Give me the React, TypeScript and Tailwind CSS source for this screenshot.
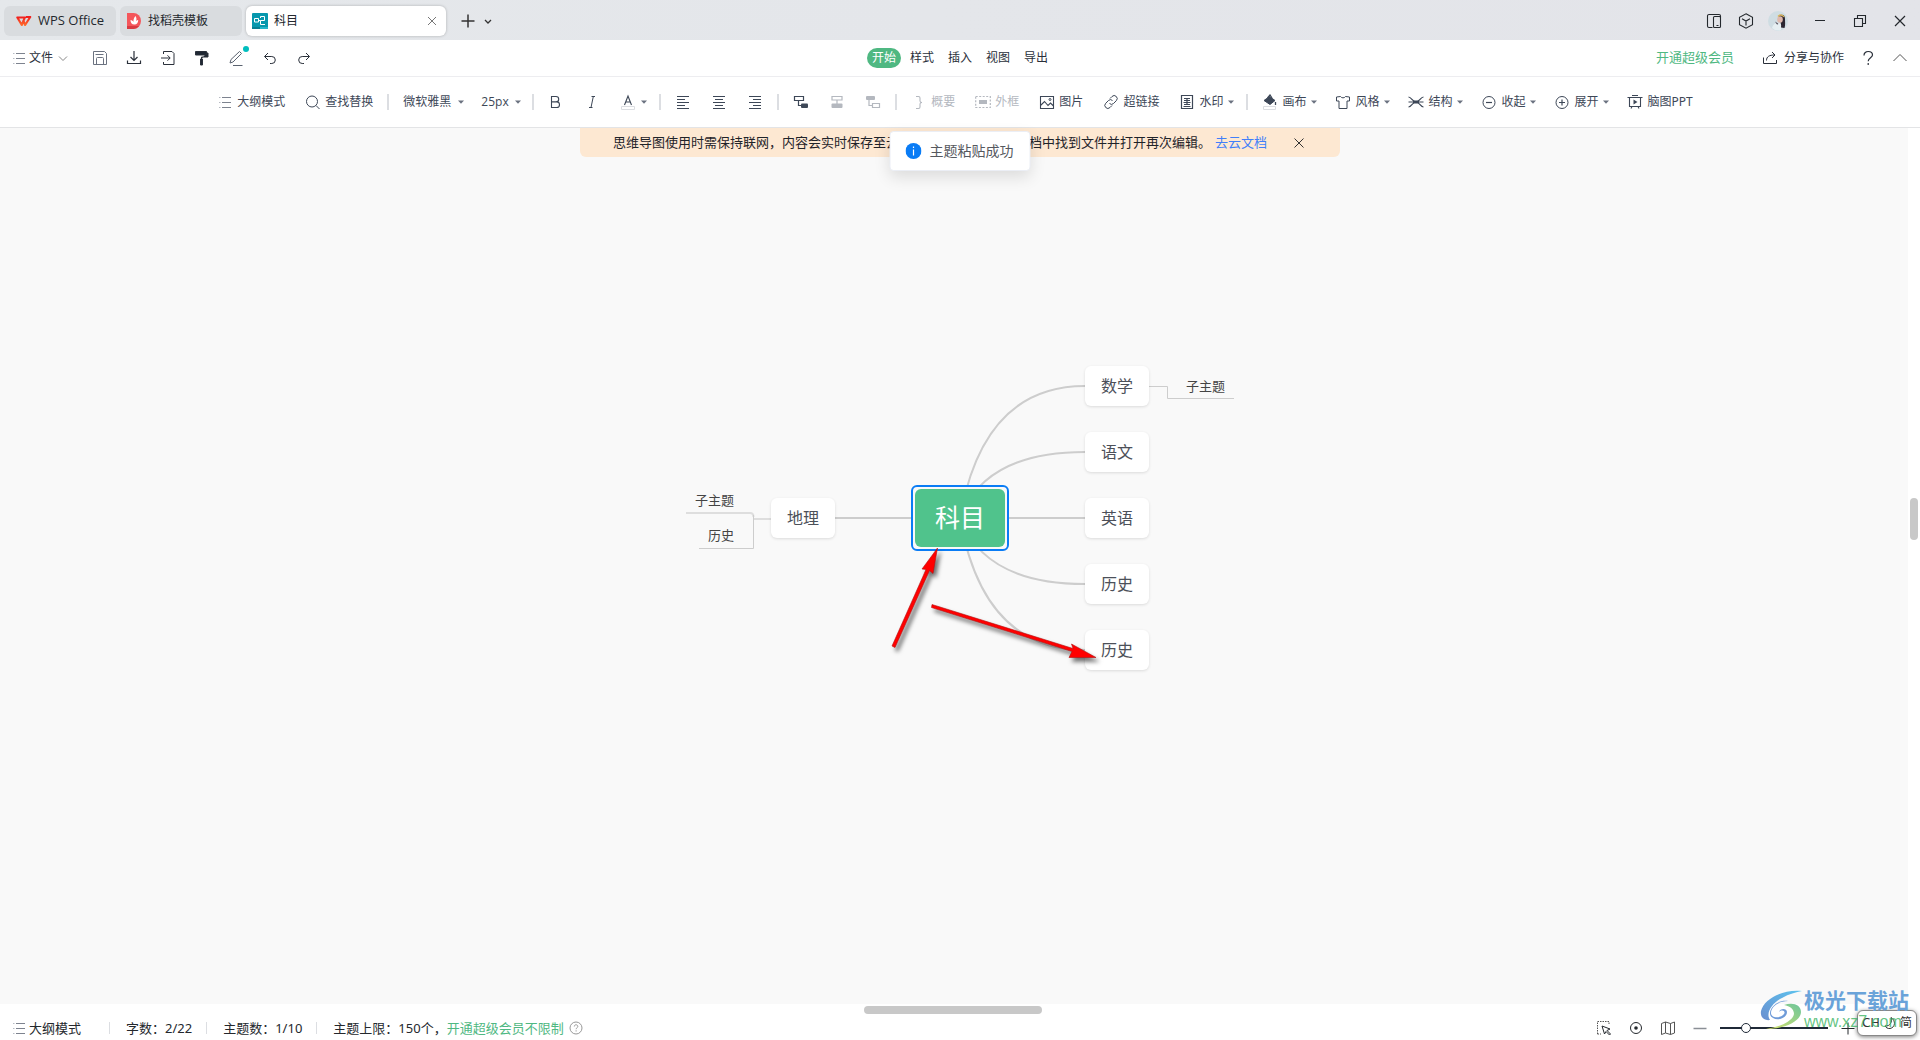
import * as React from "react";
import { clsx } from "clsx";

type IconProps = { children: React.ReactNode; className?: string };

function Icon({ children, className }: IconProps) {
  return (
    <svg viewBox="0 0 16 16" fill="none" stroke="currentColor" strokeWidth="1" className={clsx("h-4 w-4 shrink-0", className)} aria-hidden="true">
      {children}
    </svg>
  );
}

function Caret() {
  return (
    <svg viewBox="0 0 8 8" className="h-2 w-2 shrink-0" aria-hidden="true">
      <path d="M1 2.5h6L4 5.8z" fill="#6b7280" />
    </svg>
  );
}

function ListIcon() {
  return (
    <Icon>
      <path d="M2 3.5h1.5M2 8.5h1.5M2 13.5h1.5" stroke="#b6bac2" />
      <path d="M5 3.5h9M5 8.5h9M5 13.5h9" stroke="#7d838f" />
    </Icon>
  );
}

function Separator() {
  return <span className="mx-1 h-4 w-0.5 shrink-0 bg-[#dcdee2]" />;
}

type ToolProps = { label: string; icon: React.ReactNode; text?: string; menu?: boolean; disabled?: boolean };

function Tool({ label, icon, text, menu, disabled }: ToolProps) {
  return (
    <button
      type="button"
      aria-label={label}
      disabled={disabled}
      className={clsx("flex h-8 items-center gap-1 pl-2.5 whitespace-nowrap", menu ? "pr-[7px]" : "pr-2.5", disabled ? "text-[#b4b8bf]" : "text-[#3d4757]")}
    >
      {icon}
      {text && <span>{text}</span>}
      {menu && <Caret />}
    </button>
  );
}

function ToolSelect({ label, value, options, className }: { label: string; value: string; options: string[]; className: string }) {
  return (
    <label className="flex h-8 items-center gap-1 pr-1.5 pl-2.5 text-[#3d4757]">
      <select aria-label={label} defaultValue={value} className={clsx("appearance-none bg-transparent outline-none", className)}>
        {options.map((o) => <option key={o}>{o}</option>)}
      </select>
      <Caret />
    </label>
  );
}

function TitleBar() {
  return (
    <header className="flex h-10 items-center justify-between bg-linear-to-r from-[#e5e8eb] to-[#e3e4e9] pt-px pl-1 text-[#24282d]">
      <div className="flex items-center gap-1">
        <button type="button" className="flex h-[30px] w-28 items-center gap-1.5 rounded-md bg-[#d9dcdf] pl-3 font-['Open_Sans'] text-[13px] whitespace-nowrap">
          <svg viewBox="0 0 18 14" className="h-3.5 w-4 shrink-0" fill="none" stroke="url(#wps)" strokeWidth="2.4" strokeLinejoin="round" aria-hidden="true">
            <defs>
              <linearGradient id="wps" x1="0" y1="0" x2="0" y2="1">
                <stop offset="0" stopColor="#f01d1d" />
                <stop offset="1" stopColor="#ff6a2b" />
              </linearGradient>
            </defs>
            <path d="M1.5 3H10l-3.500 8.500zM8 6l2.300 5.500L16 2.500h-5" />
          </svg>
          WPS Office
        </button>
        <button type="button" className="flex h-[30px] w-[122px] items-center gap-1.5 rounded-md bg-[#d9dcdf] pl-1.5 text-xs">
          <svg viewBox="0 0 16 16" className="h-4 w-4" aria-hidden="true">
            <path d="M1 0h6.500a7.500 8 0 0 1 0 16H1z" fill="#f4565b" />
            <path d="M1 13h12a7.500 7.500 0 0 1-5.500 3H1z" fill="#d93b42" />
            <path d="M8.500 11.500c-3 0-4-2-4-4.500 1.500.3 2.500 1 3 2C7.300 6.500 8 4.500 9.500 3c1 1.500 1.200 3 .7 5 .6-.7 1.300-1 2-1 0 2.500-1.200 4.500-3.700 4.500z" fill="#fff" />
          </svg>
          找稻壳模板
        </button>
        <div className="flex h-[30px] w-[200px] items-center gap-1.5 rounded-md bg-white px-1.5 text-xs shadow-[0_0_3px_rgba(0,0,0,0.25)]">
          <svg viewBox="0 0 16 16" className="h-4 w-4" fill="none" stroke="#fff" strokeWidth="1" aria-hidden="true">
            <rect width="16" height="16" rx="1" fill="#0697ad" stroke="none" />
            <path d="M0 14h16v2H0z" fill="#067f93" stroke="none" />
            <path d="M8 14h8v2H8z" fill="#23b6cc" stroke="none" />
            <path d="M2.500 5.500h4v3.500h-4zM6.500 7.500h2M12.500 7.500v-4h-4V5M8.500 7.500h4M8.500 7.500v4h4.500" />
          </svg>
          <span className="flex-1">科目</span>
          <button type="button" aria-label="关闭标签">
            <Icon><path d="M4 4l8 8M12 4l-8 8" stroke="#777" /></Icon>
          </button>
        </div>
        <button type="button" aria-label="新建标签" className="ml-2.5">
          <Icon><path d="M8 1.500v13M1.500 8h13" stroke="#333" strokeWidth="1.500" /></Icon>
        </button>
        <button type="button" aria-label="标签列表">
          <Icon><path d="M5 7l3 3 3-3" stroke="#333" strokeWidth="1.300" /></Icon>
        </button>
      </div>
      <div className="flex items-center">
        <button type="button" aria-label="分屏" className="flex w-8 justify-center">
          <Icon><path d="M6.500 14.500H3A1.500 1.500 0 0 1 1.500 13V3A1.500 1.500 0 0 1 3 1.500h10A1.500 1.500 0 0 1 14.500 3v2M8.500 3.500h5a1 1 0 0 1 1 1v9a1 1 0 0 1-1 1h-5a1 1 0 0 1-1-1v-9a1 1 0 0 1 1-1zM10.500 12.500h2" strokeWidth="1.100" /></Icon>
        </button>
        <button type="button" aria-label="应用中心" className="flex w-8 justify-center">
          <Icon><path d="M8 .8l6.500 3.500v7.400L8 15.200l-6.500-3.500V4.300zM4 5.800l4 2.200 4-2.200M8 8v4.500" strokeWidth="1.100" /></Icon>
        </button>
        <button type="button" aria-label="账号" className="mx-1.5 flex">
          <svg viewBox="0 0 20 20" className="h-5 w-5" aria-hidden="true">
            <circle cx="10" cy="10" r="10" fill="#cfdde3" />
            <path d="M4 17c1-4 3.500-5.500 7-5l3 2-1 5a9 9 0 0 1-9-2z" fill="#e6eff2" />
            <path d="M11 5c3-2.500 6-1 6 3 0 3 .500 6-.500 9l-3.500-.500c.500-3-.500-5-1-7z" fill="#2b2530" />
            <ellipse cx="12" cy="8.500" rx="2.800" ry="3.200" fill="#dfb9ae" />
            <path d="M10 5.500c1.500-2 4.500-2 6 .500" stroke="#d7b45c" strokeWidth="1.400" fill="none" />
            <path d="M7 10.500l3.500 2.500-1.500.500z" fill="#3d3440" />
          </svg>
        </button>
        <button type="button" aria-label="最小化" className="ml-1.5 flex w-10 justify-center">
          <Icon><path d="M3 7.500h10" /></Icon>
        </button>
        <button type="button" aria-label="还原" className="flex w-10 justify-center">
          <Icon><path d="M2.500 5.500h8v8h-8zM5.500 5.500v-3h8v8h-3" strokeWidth="1.100" /></Icon>
        </button>
        <button type="button" aria-label="关闭" className="flex w-10 justify-center">
          <Icon><path d="M3 3l10 10M13 3L3 13" strokeWidth="1.200" /></Icon>
        </button>
      </div>
    </header>
  );
}

const quickTools = [
  { label: "保存", icon: <path d="M1.500 1.500h11l2 2v11h-13zM4.500 14.500v-6a1 1 0 0 1 1-1h5a1 1 0 0 1 1 1v6M3.500 4.500h8" stroke="#6b7280" /> },
  { label: "下载", icon: <path d="M8 1v9M4.500 7L8 10.500 11.500 7M1.500 10.500v3h13v-3" strokeWidth="1.200" /> },
  { label: "导出", icon: <path d="M3.500 4V1.500H12l2 2v11H3.500V12M1 8h9M7.500 5.300L10.200 8l-2.700 2.700" /> },
  { label: "格式刷", icon: <path d="M1.500 1.500h11v3.500h-11zM12.500 3h1.500v4H7.500V9M6.500 9h2v6h-2z" fill="#1f2733" strokeWidth="1" /> },
  { label: "撤销", icon: <path d="M6 3L2.500 6.500 6 10M2.800 6.500h7a3.500 3.500 0 0 1 0 7H8" /> },
  { label: "重做", icon: <path d="M10 3l3.500 3.500L10 10M13.200 6.500h-7a3.500 3.500 0 0 0 0 7H8" /> },
];

function QuickButton({ label, children }: { label: string; children: React.ReactNode }) {
  return <button type="button" aria-label={label} className="relative flex w-[34px] justify-center">{children}</button>;
}

function MenuBar() {
  return (
    <div className="grid h-[37px] grid-cols-[1fr_auto_1fr] items-center border-b border-[#ededf0] bg-white text-xs text-[#2a303a]">
      <div className="flex items-center pl-[11px]">
        <button type="button" className="mr-3 flex items-center gap-0.5">
          <ListIcon />
          文件
          <Icon><path d="M4 6.500l4 4 4-4" stroke="#888" /></Icon>
        </button>
        {quickTools.slice(0, 4).map((t) => <QuickButton key={t.label} label={t.label}><Icon>{t.icon}</Icon></QuickButton>)}
        <QuickButton label="画笔">
          <Icon><path d="M2 13l1-3.500L11.500 1.500l2 2L5 12zM5 15.500h9.500" stroke="#5b6370" /></Icon>
          <span className="absolute -top-1 right-1 h-1.5 w-1.5 rounded-full bg-[#00bebe]" />
        </QuickButton>
        {quickTools.slice(4).map((t) => <QuickButton key={t.label} label={t.label}><Icon>{t.icon}</Icon></QuickButton>)}
      </div>
      <nav className="flex gap-1">
        {["开始", "样式", "插入", "视图", "导出"].map((name, i) => (
          <button key={name} type="button" className={clsx("h-5 rounded-full px-[5px]", i === 0 && "bg-[#4fb882] text-white")}>{name}</button>
        ))}
      </nav>
      <div className="flex items-center justify-end pr-3">
        <a href="#vip" className="text-[13px] text-[#4fb882]">开通超级会员</a>
        <button type="button" className="ml-7 flex items-center gap-1.5">
          <Icon><path d="M1.500 7.500v6h13V10M4.500 10.500c0-4 3-5.500 8-5.500M10 2l3 3-3 3" /></Icon>
          分享与协作
        </button>
        <button type="button" aria-label="帮助" className="ml-4">
          <Icon><path d="M4 5.500c0-5.500 8.500-5 8.500-.500 0 2.500-4.300 3-4.300 6.200M8.200 13v2" strokeWidth="1.200" /></Icon>
        </button>
        <button type="button" aria-label="收起功能区" className="ml-4">
          <Icon><path d="M1.500 11L8 4.500l6.500 6.500" stroke="#555" /></Icon>
        </button>
      </div>
    </div>
  );
}

function ToolBar() {
  return (
    <div className="flex h-[51px] items-center justify-center border-b border-[#e3e4e6] bg-white pr-2.5 text-xs">
      <Tool label="大纲模式" text="大纲模式" icon={<ListIcon />} />
      <Tool label="查找替换" text="查找替换" icon={<Icon><circle cx="7" cy="7.500" r="5.500" /><path d="M11 11.500l3.500 3.500" /></Icon>} />
      <Separator />
      <ToolSelect label="字体" value="微软雅黑" options={["微软雅黑", "宋体", "黑体"]} className="w-[50px]" />
      <ToolSelect label="字号" value="25px" options={["18px", "25px", "32px"]} className="w-[29px] font-['Open_Sans']" />
      <Separator />
      <Tool label="加粗" icon={<Icon><path d="M3.500 2.500h4.500a2.700 2.700 0 0 1 0 5.400H3.500zM3.500 7.900h5.200a2.800 2.800 0 0 1 0 5.600H3.500z" strokeWidth="1.100" /></Icon>} />
      <Tool label="斜体" icon={<Icon><path d="M7.500 2.500h3.500M5 13.500h3.500M9.300 2.500l-2.300 11" strokeWidth="1" /></Icon>} />
      <Tool label="字体颜色" menu icon={<Icon><path d="M4.500 11L8 2l3.500 9M5.600 8h4.800" strokeWidth="1.100" /><path d="M1.500 12.500h13v3h-13z" stroke="#dcdee2" /></Icon>} />
      <Separator />
      <Tool label="左对齐" icon={<Icon><path d="M2 2.500h12M2 5.500h8M2 8.500h12M2 11.500h8M2 14.500h12" /></Icon>} />
      <Tool label="居中" icon={<Icon><path d="M2 2.500h12M4 5.500h8M2 8.500h12M4 11.500h8M2 14.500h12" /></Icon>} />
      <Tool label="右对齐" icon={<Icon><path d="M2 2.500h12M6 5.500h8M2 8.500h12M6 11.500h8M2 14.500h12" /></Icon>} />
      <Separator />
      <Tool label="插入子主题" icon={<Icon><path d="M1.500 2.500h9v4h-9zM5.500 6.500v5H8" strokeWidth="1.200" /><rect x="8" y="9.500" width="7" height="4.500" rx="1" fill="currentColor" stroke="none" /></Icon>} />
      <Tool label="插入同级主题" disabled icon={<Icon><path d="M3 2.500h10v3.500H3zM8 6v4" strokeWidth="1.200" /><rect x="2.500" y="9.500" width="11" height="4.500" rx="1" fill="currentColor" stroke="none" /></Icon>} />
      <Tool label="插入父主题" disabled icon={<Icon><rect x="1" y="2" width="9" height="4" rx="1" fill="currentColor" stroke="none" /><path d="M4 6v5.500h3M7.500 9.500h7v4h-7z" strokeWidth="1.200" /></Icon>} />
      <Separator />
      <Tool label="概要" text="概要" disabled icon={<Icon><path d="M5 2.500h2.500c1 0 1.500.500 1.500 1.500v3c0 1 .500 1.500 2 1.500-1.500 0-2 .500-2 1.500v3c0 1-.500 1.500-1.500 1.500H5" strokeWidth="1.100" /></Icon>} />
      <Tool label="外框" text="外框" disabled icon={<Icon><rect x=".7" y="2.500" width="14.600" height="11" strokeDasharray="2 1.500" strokeWidth="1.200" /><rect x="4" y="6" width="8" height="4" fill="currentColor" stroke="none" /></Icon>} />
      <Tool label="图片" text="图片" icon={<Icon><path d="M1.500 2.500h13v12h-13zM1.500 11.500l4-4 3.500 4 2.500-2.500 3 3" strokeWidth="1.100" /><circle cx="11" cy="5.500" r="1" /></Icon>} />
      <Tool label="超链接" text="超链接" icon={<Icon><path d="M7 4.500l2-2a2.900 2.900 0 0 1 4.300 4.200L10.500 9.500a2.900 2.900 0 0 1-4 0M9 11.500l-2 2A2.900 2.900 0 0 1 2.700 9.300L5.500 6.500a2.900 2.900 0 0 1 4 0" /></Icon>} />
      <Tool label="水印" text="水印" menu icon={<Icon><path d="M2.500 1.500h11v13h-11zM4.500 12.500h7" strokeWidth="1.200" /><path d="M5 4.500h6M5 6.500h6M4.500 8.500h7M8 4v7M5 10.500h6" strokeWidth="1.200" /></Icon>} />
      <Separator />
      <Tool label="画布" text="画布" menu icon={<Icon><path d="M2 6.500l5.500-4L13 6.500l-5 4z" fill="currentColor" /><path d="M5.500 4L8 1l2 3M13.500 8v3" strokeWidth="1.300" /><path d="M1.500 12.500h12v3h-12z" stroke="#dcdee2" /></Icon>} />
      <Tool label="风格" text="风格" menu icon={<Icon><path d="M5.500 2.500c1 1.800 4 1.800 5 0l4 .500v4h-2.500v7.500H4V7H1.500V3z" /></Icon>} />
      <Tool label="结构" text="结构" menu icon={<Icon><path d="M.500 3c3 0 4 5 7.500 5s4.500-5 7.500-5M.500 13c3 0 4-5 7.500-5s4.500 5 7.500 5M.500 8h15" strokeWidth="1.200" /><rect x="5" y="6.500" width="6" height="3" fill="currentColor" stroke="none" /></Icon>} />
      <Tool label="收起" text="收起" menu icon={<Icon><circle cx="8" cy="8.500" r="6" /><path d="M5 8.500h6" strokeWidth="1.200" /></Icon>} />
      <Tool label="展开" text="展开" menu icon={<Icon><circle cx="8" cy="8.500" r="6" /><path d="M5 8.500h6M8 5.500v6" strokeWidth="1.200" /></Icon>} />
      <Tool label="脑图PPT" text="脑图PPT" icon={<Icon><path d="M5 1.500h6M.500 3.500h15M2.500 3.500v9h11v-9M4 14.500l1-2M12 14.500l-1-2" strokeWidth="1.100" /><path d="M6.500 5.500l4 2.500-4 2.500z" fill="currentColor" stroke="none" /></Icon>} />
    </div>
  );
}

const topics = [
  { text: "数学", pos: "left-[405px] top-2" },
  { text: "语文", pos: "left-[405px] top-[74px]" },
  { text: "英语", pos: "left-[405px] top-[140px]" },
  { text: "历史", pos: "left-[405px] top-[206px]" },
  { text: "历史", pos: "left-[405px] top-[272px]" },
  { text: "地理", pos: "left-[91px] top-[140px]" },
];

const subTopics = [
  { text: "子主题", pos: "left-[506px] top-[18px]" },
  { text: "子主题", pos: "left-[15px] top-[132px]" },
  { text: "历史", pos: "left-[28px] top-[167px]" },
];

function MindMap() {
  return (
    <div className="relative h-80 w-[560px] shrink-0">
      <svg viewBox="0 0 560 320" className="absolute inset-0 h-full w-full" fill="none" stroke="#cdcdcd" aria-hidden="true">
        <path d="M280 160Q303 28 405 28M280 160Q305 94 405 94M280 160Q305 226 405 226M280 160Q303 292 405 292" strokeWidth="2" />
        <path d="M155 160H405" strokeWidth="2" />
        <path d="M469 28.500h18.500v12H554" />
        <path d="M6 155h64q3.500 0 3.500 4M74 161h18" stroke="#dedede" strokeWidth="2" />
        <path d="M73.500 157v33.500H19" />
      </svg>
      {topics.map((t, i) => (
        <div key={i} className={clsx("absolute flex h-10 w-16 items-center justify-center rounded-md bg-white text-base text-[#4c5059] shadow-[0_1px_3px_rgba(0,0,0,0.12)]", t.pos)}>{t.text}</div>
      ))}
      {subTopics.map((t, i) => (
        <div key={i} className={clsx("absolute text-[13px] leading-5 text-[#444]", t.pos)}>{t.text}</div>
      ))}
      <div className="absolute top-[127px] left-[231px] h-[66px] w-[98px] rounded-md border-2 border-[#0a7cf5] bg-[#f9f9f9] p-0.5">
        <div className="flex h-full items-center justify-center rounded-md bg-[#50c38c] text-[25px] text-white">科目</div>
      </div>
      <svg viewBox="0 0 560 320" className="pointer-events-none absolute inset-0 h-full w-full overflow-visible drop-shadow-[3px_4px_2px_rgba(0,0,0,0.55)]" aria-hidden="true">
        <g fill="#ff0000" stroke="#b01010" strokeWidth=".6" strokeLinejoin="round">
          <path d="M212 288L246 211.500 242 211 257.500 190 253 215.500 249.500 212.500 215 289.500z" />
          <path d="M252 246.500L393 290.500 391.500 286 416 299.500 389 299.500 392 293.500 251.500 249.500z" />
        </g>
      </svg>
    </div>
  );
}

function Canvas() {
  return (
    <main className="relative flex min-h-0 flex-1 bg-white pr-3">
      <div className="flex-1 bg-[#f9f9f9]" />
      <div className="absolute inset-0 flex flex-col items-center">
        <div className="flex h-[29px] w-[760px] items-center rounded-b-md bg-[#fde8d2] pl-[33px] text-[13px] whitespace-nowrap text-[#1f2329]">
          <span>思维导图使用时需保持联网，内容会实时保存至云文档中，您可以在云文档中找到文件并打开再次编辑。</span>
          <a href="#cloud" className="ml-1 text-[#417ff9]">去云文档</a>
          <button type="button" aria-label="关闭提示" className="ml-6">
            <Icon><path d="M3.500 3.500l9 9M12.500 3.500l-9 9" stroke="#333" /></Icon>
          </button>
        </div>
        <div className="mt-[201px]"><MindMap /></div>
      </div>
      <div role="status" className="absolute top-[3px] left-1/2 flex h-10 w-[141px] -translate-x-1/2 items-center gap-2 rounded border border-[#ebeef5] bg-white pl-[15px] text-sm whitespace-nowrap text-[#55585e] shadow-[0_6px_16px_rgba(0,0,0,0.12)]">
        <svg viewBox="0 0 16 16" className="h-4 w-4 shrink-0" aria-hidden="true">
          <circle cx="8" cy="8" r="8" fill="#0a7cf5" />
          <path d="M8 6.500v6M8 3.500v1.500" stroke="#fff" strokeWidth="1.200" />
        </svg>
        主题粘贴成功
      </div>
      <div className="absolute top-[370px] right-0.5 h-[42px] w-2 rounded-full bg-[#c8c8c8]" />
    </main>
  );
}

function StatusBar() {
  return (
    <footer className="bg-white text-[13px] text-[#24282d]">
      <div className="flex h-3 items-center justify-center pr-3.5">
        <div className="h-2 w-[178px] rounded-full bg-[#c8c8c8]" />
      </div>
      <div className="flex h-6 items-center justify-between pr-16 pb-px pl-[11px] leading-6">
        <div className="flex items-center">
          <button type="button" className="flex items-center gap-0.5"><ListIcon />大纲模式</button>
          <span className="mr-4 ml-7 h-3 w-px bg-[#dcdee2]" />
          字数：2/22
          <span className="mr-4 ml-3.5 h-3 w-px bg-[#dcdee2]" />
          主题数：1/10
          <span className="mr-4 ml-3.5 h-3 w-px bg-[#dcdee2]" />
          主题上限：150个，<a href="#vip" className="text-[#4fb882]">开通超级会员不限制</a>
          <button type="button" aria-label="帮助" className="ml-1">
            <Icon><circle cx="8" cy="8" r="6" stroke="#999" /><path d="M6.300 6.500c0-2.300 3.500-2.300 3.500 0 0 1.300-1.700 1.300-1.700 2.700M8.100 10.300v1.200" stroke="#999" /></Icon>
          </button>
        </div>
        <div className="flex items-center">
          <button type="button" aria-label="框选" className="mr-4">
            <Icon><path d="M1.500 14V1.500H13V5M1.500 14H5" strokeDasharray="1.500 1" stroke="#555" /><path d="M6 6l8 3-3 1.500 3.500 3.500-1 1-3.500-3.500L8.500 14z" /></Icon>
          </button>
          <button type="button" aria-label="定位中心" className="mr-4">
            <Icon><circle cx="8" cy="8" r="5.500" /><circle cx="8" cy="8" r="1.800" fill="currentColor" stroke="none" /></Icon>
          </button>
          <button type="button" aria-label="导航" className="mr-4">
            <Icon><path d="M1.500 3.500l4-1.500 5 1.500 4-1.500v11l-4 1.500-5-1.500-4 1.500zM5.500 2v11M10.500 3.500v11" stroke="#555" /></Icon>
          </button>
          <button type="button" aria-label="缩小" className="mr-3">
            <Icon><path d="M1.500 8.500h13" stroke="#8b8f96" strokeWidth="1.500" /></Icon>
          </button>
          <input
            type="range"
            aria-label="缩放"
            min={0}
            max={100}
            defaultValue={21}
            className="h-3 w-[108px] appearance-none bg-transparent [&::-webkit-slider-runnable-track]:h-0.5 [&::-webkit-slider-runnable-track]:bg-[#1f2937] [&::-webkit-slider-thumb]:-mt-1 [&::-webkit-slider-thumb]:h-2.5 [&::-webkit-slider-thumb]:w-2.5 [&::-webkit-slider-thumb]:appearance-none [&::-webkit-slider-thumb]:rounded-full [&::-webkit-slider-thumb]:border [&::-webkit-slider-thumb]:border-[#1f2937] [&::-webkit-slider-thumb]:bg-white"
          />
          <button type="button" aria-label="放大" className="ml-3">
            <Icon><path d="M1.500 8.500h13M8 2.500v12" /></Icon>
          </button>
        </div>
      </div>
    </footer>
  );
}

function DesktopOverlay() {
  return (
    <>
      <div className="absolute right-[3px] bottom-1 flex h-[26px] w-[60px] items-center justify-center gap-0.5 rounded-md border border-[#888] bg-white text-xs text-[#333] shadow-[0_1px_4px_rgba(0,0,0,0.5)]">
        <span className="text-[13px]">CH</span>
        <Icon><path d="M9 2.500c5 3 4.500 10-1 11-2.500.300-4-1-5-2.500 5 .500 7.500-4 6-8.500z" /></Icon>
        <span>简</span>
      </div>
      <div className="pointer-events-none absolute right-0 bottom-2 flex h-11 w-40 items-center gap-0.5">
        <svg viewBox="0 0 42 40" className="h-10 w-[42px] shrink-0" aria-hidden="true">
          <defs>
            <linearGradient id="auroraBlue" x1="0" y1="1" x2="1" y2="0">
              <stop offset="0" stopColor="#6a8fd0" />
              <stop offset="1" stopColor="#5cc3ee" />
            </linearGradient>
            <linearGradient id="auroraGreen" x1="0" y1="1" x2="1" y2="0">
              <stop offset="0" stopColor="#d9e36a" />
              <stop offset="1" stopColor="#6cc59c" />
            </linearGradient>
          </defs>
          <path d="M42 1C22-1 4 9 1 21c-1 6 3 10 9 9-5-7 3-18 12-22C29 4 36 2 42 1z" fill="url(#auroraBlue)" />
          <path d="M24 15c8-3 17-1 17 7 0 9-16 17-35 17 14-2 27-8 28-15 0-5-4-8-10-9z" fill="url(#auroraGreen)" />
          <path d="M28 11c-10 0-17 6-17 12 0 5 9 6 13 1 2-3-2-5-5-2 1-4 8-4 8 0 0 6-9 9-14 6C5 24 14 9 28 11z" fill="#6f9bd8" />
        </svg>
        <div className="flex flex-col whitespace-nowrap">
          <span className="text-[21px] leading-6 font-bold text-[#6aa3d9]">极光下载站</span>
          <span className="font-['Liberation_Sans'] text-base leading-5 text-[#3cb464]/80">www.xz7.com</span>
        </div>
      </div>
    </>
  );
}

export default function App() {
  return (
    <div className="relative flex h-screen flex-col overflow-hidden bg-white font-['Noto_Sans','Noto_Sans_CJK_SC',sans-serif]">
      <TitleBar />
      <MenuBar />
      <ToolBar />
      <Canvas />
      <StatusBar />
      <DesktopOverlay />
    </div>
  );
}
